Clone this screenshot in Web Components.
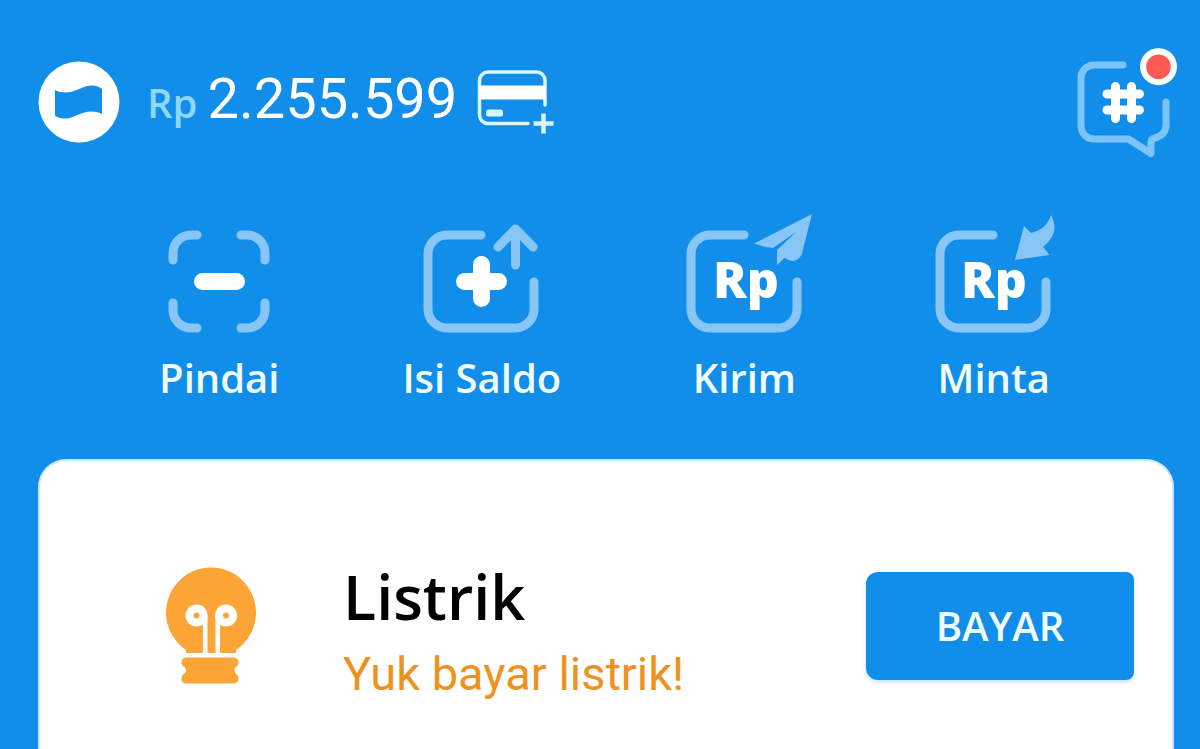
<!DOCTYPE html>
<html lang="id">
<head>
<meta charset="utf-8">
<meta name="viewport" content="width=device-width, initial-scale=1">
<title>Dompet</title>
<style>
html {
  height: 100%;
}
body {
  margin: 0;
  min-height: 100%;
  display: flex;
  background: #118eea;
  font-family: "Open Sans", "Noto Sans", sans-serif;
}
</style>
</head>
<body>
<wallet-app></wallet-app>

<template id="wallet-app">
<style>
:host {
  flex: 1;
  display: flex;
  flex-direction: column;
}
nav {
  display: grid;
  grid-template-columns: 10fr 10fr 10fr 9fr;
  padding: 48px 88px 53px;
}
main {
  flex: 1;
  display: flex;
  padding: 0 26px 0 38px;
}
svg {
  display: block;
}
.soft {
  fill: none;
  stroke: #88c6f8;
  stroke-width: 9;
  stroke-linecap: round;
  stroke-linejoin: round;
}
.rp {
  font: 800 50px "Open Sans", sans-serif;
  text-anchor: middle;
  fill: #fff;
}
</style>
<wallet-header amount="2.255.599"></wallet-header>
<nav>
  <quick-action>
    <svg slot="icon" width="140" height="124" viewBox="0 0 140 124" aria-hidden="true">
      <path class="soft" d="M24 50v-7a18 18 0 0 1 18-18h6M92 25h6a18 18 0 0 1 18 18v7M116 93v7a18 18 0 0 1-18 18h-6M48 118h-6a18 18 0 0 1-18-18v-7"/>
      <rect x="45" y="63" width="51" height="17" rx="8.5" fill="#fff"/>
    </svg>
    Pindai
  </quick-action>
  <quick-action>
    <svg slot="icon" width="140" height="124" viewBox="1 0 140 124" aria-hidden="true">
      <path class="soft" d="M70 25H36a19 19 0 0 0-19 19v55a19 19 0 0 0 19 19h68a19 19 0 0 0 19-19V72"/>
      <path class="soft" d="M104.500 55V19M87 37l17.500-18L122 37"/>
      <path d="M70.500 54.500v34M53.500 71.500h34" stroke="#fff" stroke-width="17" stroke-linecap="round"/>
    </svg>
    Isi Saldo
  </quick-action>
  <quick-action>
    <svg slot="icon" width="140" height="124" viewBox="0 0 140 124" aria-hidden="true">
      <path class="soft" d="M70 25H36a19 19 0 0 0-19 19v55a19 19 0 0 0 19 19h68a19 19 0 0 0 19-19V72"/>
      <path fill="#88c6f8" d="M138 4L80 33.500Q88 36.500 99 38L122 22L103 40V55L110.500 48Q121 55 127.500 45Z"/>
      <text class="rp" x="72" y="88">Rp</text>
    </svg>
    Kirim
  </quick-action>
  <quick-action>
    <svg slot="icon" width="140" height="124" viewBox="1 0 140 124" aria-hidden="true">
      <path class="soft" d="M70 25H36a19 19 0 0 0-19 19v55a19 19 0 0 0 19 19h68a19 19 0 0 0 19-19V72"/>
      <path fill="#88c6f8" d="M92 50L101 16L108 23Q124 19 128 5Q138 23 120 37L126.500 45Z"/>
      <text class="rp" x="71" y="88">Rp</text>
    </svg>
    Minta
  </quick-action>
</nav>
<main>
  <bill-card action="BAYAR">
    <svg slot="icon" width="100" height="124" viewBox="0 0 100 124" aria-hidden="true">
      <path fill="#fda437" d="M25 89V86A45 45 0 1 1 75 86V89Z"/>
      <g fill="#fff">
        <circle cx="35.500" cy="51.500" r="11"/>
        <circle cx="65" cy="51.500" r="11"/>
        <path d="M42 51h4.500v39H42zM54.500 51H59v39h-4.500z"/>
      </g>
      <g fill="#fda437">
        <circle cx="35.500" cy="51.500" r="3"/>
        <circle cx="65" cy="51.500" r="3"/>
        <path d="M25 93.500H73Q77.500 94 77.500 98.500Q77.500 101.500 74.500 103Q72.500 106.500 74.500 109.500Q77.500 111 77.500 114.500Q77.500 119 73 119.500H25Q20.500 119 20.500 114.500Q20.500 111 23.500 109.500Q27 106.500 23.500 103Q20.500 101.500 20.500 98.500Q20.500 94 25 93.500Z"/>
      </g>
    </svg>
    <span slot="title">Listrik</span>
    Yuk bayar listrik!
  </bill-card>
</main>
</template>

<template id="wallet-header">
<style>
:host {
  display: block;
  padding: 42px 20px 0 38px;
}
header {
  display: flex;
  align-items: center;
  justify-content: space-between;
}
.wallet {
  display: flex;
  align-items: center;
}
.balance {
  display: flex;
  align-items: baseline;
  gap: 10px;
  margin: 0;
  padding: 0 17px 2px 27px;
  line-height: 72px;
}
.currency {
  font-size: 40px;
  font-weight: 600;
  color: #8ed7ff;
}
.amount {
  font-family: Roboto, sans-serif;
  font-size: 56px;
  color: #fff;
}
button {
  display: block;
  padding: 0;
  border: 0;
  background: none;
  cursor: pointer;
}
svg {
  display: block;
}
</style>
<header>
  <div class="wallet">
    <svg width="82" height="82" viewBox="0 0 82 82" aria-hidden="true">
      <circle cx="41" cy="41" r="40.500" fill="#fff"/>
      <path fill="#118eea" d="M17 29C32 36.500 43 24.500 54 24.500Q60 24.500 64 28V53C48 45.500 38 57.500 27 57.500Q20 57.500 17 54.500Z"/>
    </svg>
    <p class="balance"><span class="currency">Rp</span><span class="amount"></span></p>
    <button type="button" aria-label="Tambah kartu">
      <svg width="84" height="78" viewBox="0 0 84 78" fill="none" stroke="#d8f6ff" stroke-width="3.500" stroke-linecap="round">
        <path d="M54 60.500H14a8.500 8.500 0 0 1-8.500-8.500V17.500A8.500 8.500 0 0 1 14 9h48.500a8.500 8.500 0 0 1 8.500 8.500V42"/>
        <path d="M5 22.500h67v14H5z" fill="#fff" stroke="none"/>
        <rect x="12" y="46.500" width="17" height="7" rx="2.500" fill="#d8f6ff" stroke="none"/>
        <path d="M69.500 50.500v20M59.500 60.500h20" stroke-width="4.500" stroke-linecap="butt"/>
      </svg>
    </button>
  </div>
  <button type="button" aria-label="Pesan">
    <svg width="110" height="120" viewBox="0 2 110 120">
      <path d="M53 25H24a13 13 0 0 0-13 13v48a13 13 0 0 0 13 13h34.500L81 113.500V102Q81 99 85 98Q96 95 96 85V62" fill="none" stroke="#7cc4fc" stroke-width="7" stroke-linecap="round" stroke-linejoin="round"/>
      <path d="M45.500 46.500v32M61.500 46.500v32M37 54h32.500M37 70h32.500" stroke="#fff" stroke-width="9" stroke-linecap="round"/>
      <circle cx="88.500" cy="26.700" r="18.500" fill="#fff"/>
      <circle cx="88.500" cy="26.700" r="12.300" fill="#ff5a52"/>
    </svg>
  </button>
</header>
</template>

<template id="quick-action">
<style>
:host {
  display: flex;
  justify-content: center;
}
button {
  display: flex;
  flex-direction: column;
  align-items: center;
  gap: 16px;
  padding: 0;
  border: 0;
  background: none;
  color: #f0fdff;
  font: 600 40px/56px "Open Sans", "Noto Sans", sans-serif;
  white-space: nowrap;
  cursor: pointer;
}
</style>
<button type="button">
  <slot name="icon"></slot>
  <span><slot></slot></span>
</button>
</template>

<template id="bill-card">
<style>
:host {
  flex: 1;
  box-sizing: border-box;
  padding: 88px 38px 40px 121px;
  border: 2px solid #cfe6fb;
  border-bottom: 0;
  border-radius: 28px 28px 0 0;
  background: #fff;
}
section {
  display: flex;
  align-items: center;
}
.text {
  flex: 1;
  padding-left: 82px;
}
h2,
p {
  margin: 0;
}
h2 {
  font-size: 61px;
  font-weight: 600;
  line-height: 96px;
  color: #000;
}
p {
  font: 47px/58px Roboto, sans-serif;
  color: #ee921f;
}
button {
  width: 268px;
  height: 108px;
  padding: 0;
  border: 0;
  border-radius: 12px 8px 8px 12px;
  background: #118eea;
  box-shadow: 0 2px 4px #118eea40;
  color: #f0fdff;
  font: 600 40px/56px "Open Sans", "Noto Sans", sans-serif;
  cursor: pointer;
}
</style>
<section>
  <slot name="icon"></slot>
  <div class="text">
    <h2><slot name="title"></slot></h2>
    <p><slot></slot></p>
  </div>
  <button type="button"></button>
</section>
</template>

<script>
class BaseElement extends HTMLElement {
  constructor() {
    super();
    const template = document.getElementById(this.localName);
    this.attachShadow({ mode: "open" });
    this.shadowRoot.appendChild(template.content.cloneNode(true));
  }
}

class WalletHeader extends BaseElement {
  connectedCallback() {
    const amount = this.shadowRoot.querySelector(".amount");
    amount.textContent = this.getAttribute("amount");
  }
}

class QuickAction extends BaseElement {}

class BillCard extends BaseElement {
  connectedCallback() {
    const button = this.shadowRoot.querySelector("button");
    button.textContent = this.getAttribute("action");
  }
}

class WalletApp extends BaseElement {}

customElements.define("wallet-header", WalletHeader);
customElements.define("quick-action", QuickAction);
customElements.define("bill-card", BillCard);
customElements.define("wallet-app", WalletApp);
</script>
</body>
</html>
